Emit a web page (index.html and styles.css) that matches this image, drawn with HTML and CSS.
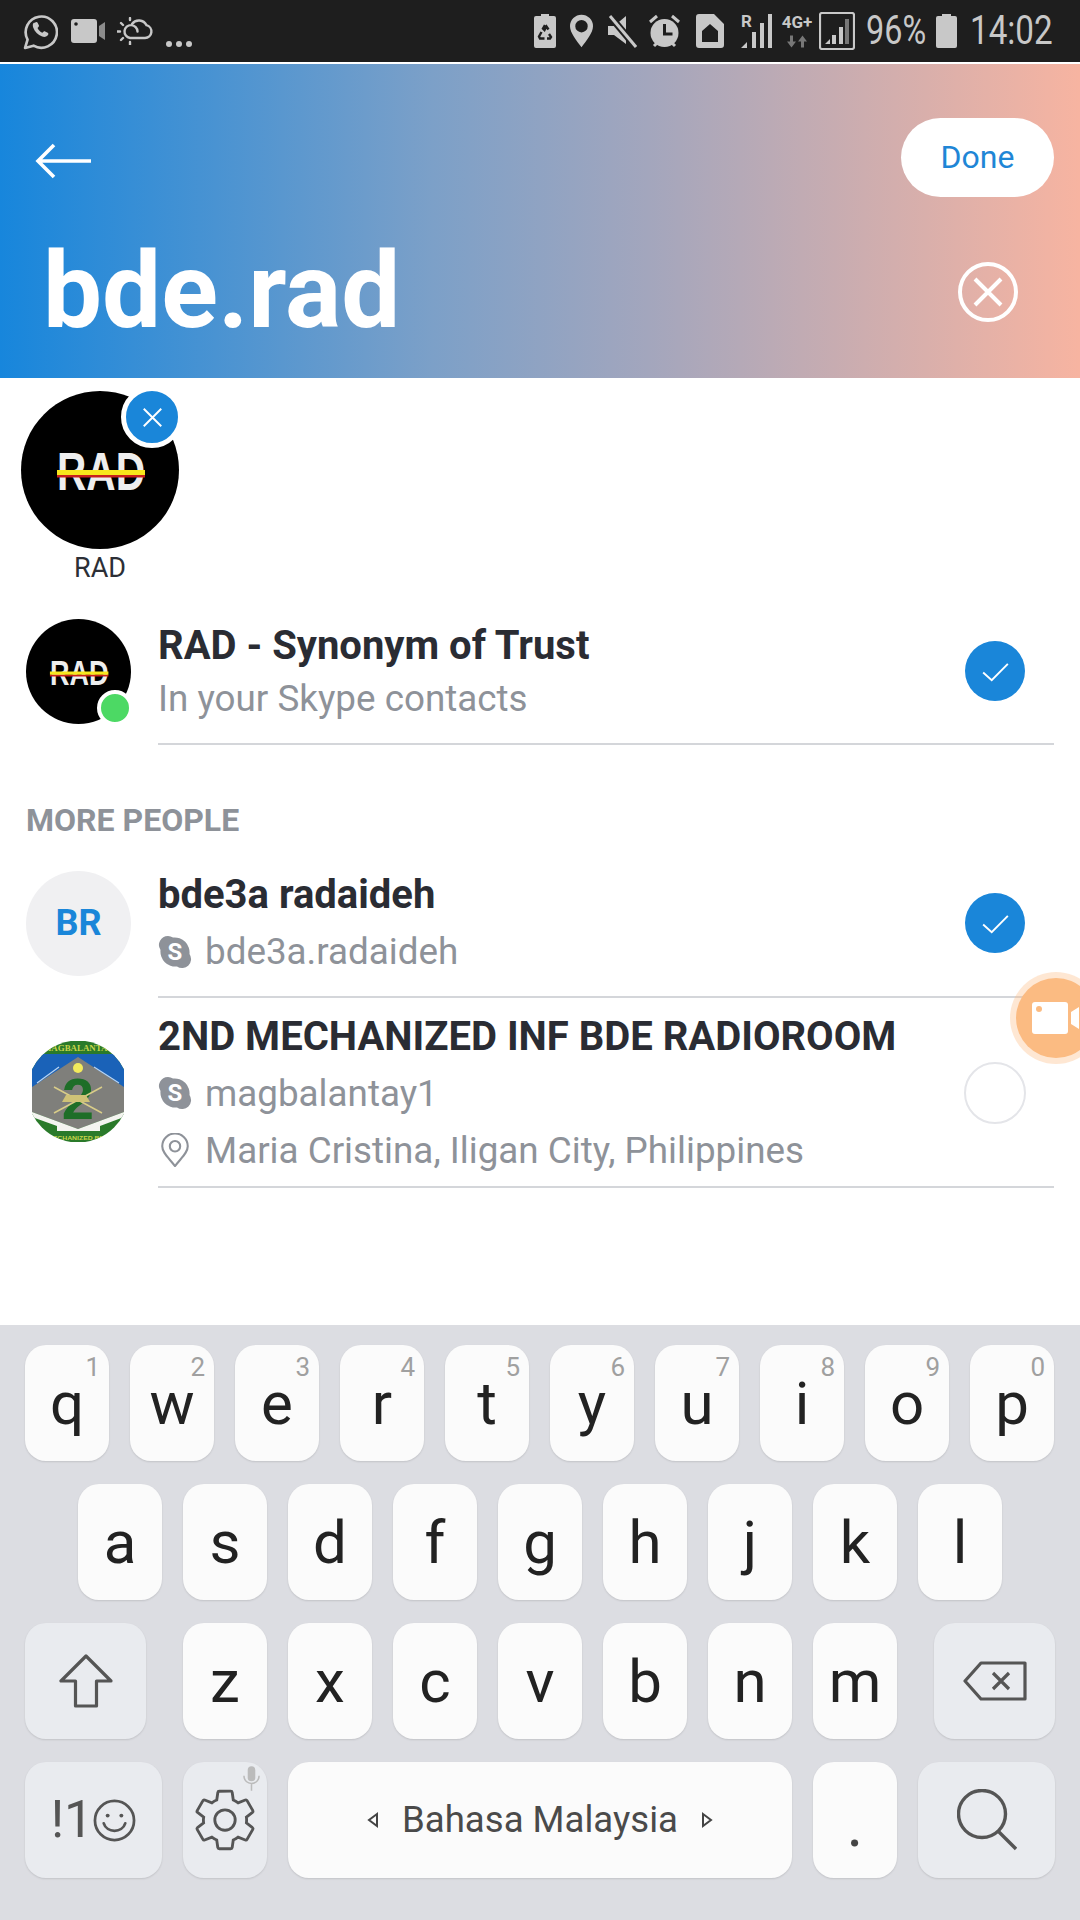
FILE: index.html
```html
<!DOCTYPE html>
<html lang="en">
<head>
<meta charset="utf-8">
<title>Skype search</title>
<link rel="stylesheet" href="styles.css">
</head>
<body>
<div class="phone">
  <div class="status">
    <div class="status-left">
      <svg class="si si-wa" viewBox="0 0 34 36"><path d="M2 34l2.400-8.200A15.200 15.200 0 1 1 10.200 31.800z" fill="none" stroke="#c8c8c8" stroke-width="2.600" stroke-linejoin="round"/><path d="M11.500 9.500c1-1 2.200-1 2.700 0l1.200 2.500c.3.700.1 1.200-.4 1.700l-.9 1c.9 2 2.600 3.700 4.700 4.600l1.100-1.100c.5-.5 1-.6 1.600-.3l2.500 1.300c.9.500.9 1.700-.1 2.700-1.400 1.400-3.300 1.700-5.300.9-4.100-1.600-7.300-4.800-8.700-8.800-.7-2-.4-3.800.6-4.500z" fill="#c8c8c8"/></svg>
      <svg class="si si-vid" viewBox="0 0 34 24"><rect x="0" y="0" width="26" height="24" rx="3" fill="#c8c8c8"/><circle cx="5" cy="5" r="1.800" fill="#1e1e1e"/><path d="M28 7l6-4v18l-6-4z" fill="#8c8c8c"/></svg>
      <svg class="si si-cloud" viewBox="0 0 36 28" fill="none" stroke="#c8c8c8" stroke-width="2.400"><path d="M13 21h15a6.500 6.500 0 0 0 1.500-12.800A8.500 8.500 0 0 0 15 7M20.500 14.500a6.500 6.500 0 1 0-7.500 6.500" stroke-linecap="round"/><path d="M0 14.500h3M13 25v3M4 6l2 2M4 23l2-2M13 1v2" stroke-linecap="round"/></svg>
      <div class="dots"><i></i><i></i><i></i></div>
    </div>
    <div class="status-right">
      <svg class="si si-batr" viewBox="0 0 22 34"><path d="M7 0h8v2h5a2 2 0 0 1 2 2v28a2 2 0 0 1-2 2H2a2 2 0 0 1-2-2V4a2 2 0 0 1 2-2h5z" fill="#c8c8c8"/><path d="M11 11l-2 3.500 1.500 1.500 2-3.500 2 3M7.500 18L5 22.500l1 2h4.500M15 20l2 3-1 1.500h-3" fill="none" stroke="#1e1e1e" stroke-width="2.400"/></svg>
      <svg class="si si-pin" viewBox="0 0 24 34"><path fill-rule="evenodd" d="M12 0a12 12 0 0 1 12 12c0 7-7 15-12 22C7 27 0 19 0 12A12 12 0 0 1 12 0zm0 5.500a6.500 6.500 0 1 0 0 13 6.500 6.500 0 0 0 0-13z" fill="#c8c8c8"/></svg>
      <svg class="si si-mute" viewBox="0 0 30 34"><path d="M1 12h6L19 2v28L7 21H1z" fill="#c8c8c8"/><path d="M2 1l27 32" stroke="#1e1e1e" stroke-width="7"/><path d="M3 2l26 31" stroke="#c8c8c8" stroke-width="3"/></svg>
      <svg class="si si-alarm" viewBox="0 0 31 34"><circle cx="15.500" cy="19" r="14" fill="#c8c8c8"/><path d="M15.500 10v10h8" fill="none" stroke="#1e1e1e" stroke-width="3"/><path d="M1 8l7-6M30 8l-7-6M5 32l3-3M26 32l-3-3" stroke="#c8c8c8" stroke-width="3"/></svg>
      <svg class="si si-sim" viewBox="0 0 28 34"><path fill-rule="evenodd" d="M3 0h15l10 10v21a3 3 0 0 1-3 3H3a3 3 0 0 1-3-3V3a3 3 0 0 1 3-3zm3 17v11h16V17l-8-7z" fill="#c8c8c8"/></svg>
      <div class="sig-r"><span class="tiny tiny-r">R</span><svg class="si-bars" viewBox="0 0 31 34"><path d="M0 34l6-6v6zM11 18h4v16h-4zM19 9h4v25h-4zM27 0h4v34h-4z" fill="#c8c8c8"/></svg></div>
      <div class="sig-4g"><span class="tiny">4G+</span><svg class="si-arrows" viewBox="0 0 20 12"><path d="M3 0h3v6h3l-4.500 6L0 6h3z" fill="#777"/><path d="M14 12h3V6h3L15.500 0 11 6h3z" fill="#777"/></svg></div>
      <svg class="si si-box" viewBox="0 0 36 38"><rect x="1" y="1" width="34" height="36" rx="2" fill="none" stroke="#c8c8c8" stroke-width="2.200"/><path d="M6 32l5-5v5zM13 32v-9h4v9zM20 32V15h4v17z" fill="#c8c8c8"/><path d="M26 32V7h4v25z" fill="#777"/></svg>
      <span class="st-text st-pct">96%</span>
      <svg class="si si-bat" viewBox="0 0 21 34"><path d="M6 0h9v2h4a2 2 0 0 1 2 2v28a2 2 0 0 1-2 2H2a2 2 0 0 1-2-2V4a2 2 0 0 1 2-2h4z" fill="#c8c8c8"/></svg>
      <span class="st-text st-time">14:02</span>
    </div>
  </div>

  <header class="head">
    <div class="head-top">
      <svg class="back" viewBox="0 0 56 36" fill="none" stroke="#fff" stroke-width="3.600"><path d="M56 18H3M19 2L3 18l16 16"/></svg>
      <button class="done">Done</button>
    </div>
    <div class="head-search">
      <h1 class="query">bde.rad</h1>
      <svg class="clear" viewBox="0 0 60 60" fill="none" stroke="#fff" stroke-width="4"><circle cx="30" cy="30" r="28"/><path d="M17 17l26 26M43 17L17 43"/></svg>
    </div>
  </header>

  <main class="content">
    <div class="chip">
      <div class="chip-av">
        <svg class="rad" viewBox="0 0 158 158"><circle cx="79" cy="79" r="79" fill="#000"/><text x="80" y="99" text-anchor="middle" class="rad-text" textLength="88" lengthAdjust="spacingAndGlyphs">RAD</text><rect x="36" y="79" width="88" height="5" fill="#f8e71c"/><rect x="36" y="84" width="88" height="2.500" fill="#c8201c"/></svg>
        <span class="chip-x"><svg viewBox="0 0 24 24" fill="none" stroke="#fff" stroke-width="2.200"><path d="M2 2l20 20M22 2L2 22"/></svg></span>
      </div>
      <div class="chip-label">RAD</div>
    </div>

    <section class="row row-one">
      <div class="av">
        <svg class="rad" viewBox="0 0 158 158"><circle cx="79" cy="79" r="79" fill="#000"/><text x="80" y="99" text-anchor="middle" class="rad-text" textLength="88" lengthAdjust="spacingAndGlyphs">RAD</text><rect x="36" y="79" width="88" height="5" fill="#f8e71c"/><rect x="36" y="84" width="88" height="2.500" fill="#c8201c"/></svg>
        <span class="online"></span>
      </div>
      <div class="body">
        <div class="txt txt-tight">
          <div class="name">RAD - Synonym of Trust</div>
          <div class="sub">In your Skype contacts</div>
        </div>
        <span class="check"><svg viewBox="0 0 28 20" fill="none" stroke="#fff" stroke-width="2"><path d="M1 10l9 8L27 1"/></svg></span>
      </div>
    </section>

    <h2 class="label">MORE PEOPLE</h2>

    <section class="row row-two">
      <div class="av av-init">BR</div>
      <div class="body">
        <div class="txt">
          <div class="name">bde3a radaideh</div>
          <div class="sub"><svg class="sky" viewBox="0 0 34 34"><path d="M10 1a9 9 0 0 1 5 1.500 15 15 0 0 1 16.500 16.500A9 9 0 0 1 19 31.500 15 15 0 0 1 2.500 15 9 9 0 0 1 10 1z" fill="#8e9299"/><text x="17" y="25" text-anchor="middle" class="sky-s">S</text></svg>bde3a.radaideh</div>
        </div>
        <span class="check"><svg viewBox="0 0 28 20" fill="none" stroke="#fff" stroke-width="2"><path d="M1 10l9 8L27 1"/></svg></span>
      </div>
    </section>

    <section class="row row-three">
      <div class="av av-emblem">
        <svg viewBox="0 0 92 101">
          <defs><clipPath id="em"><circle cx="46" cy="50.500" r="51"/></clipPath></defs>
          <g clip-path="url(#em)">
            <rect width="92" height="101" fill="#2a7a2a"/>
            <rect y="13" width="92" height="40" fill="#1a62b8"/>
            <path d="M0 46L46 16l46 30v25L46 88 0 71z" fill="#7f7f7b"/>
            <path d="M0 71l46 17 46-17v5L68 85v5H25v-5L0 76z" fill="#f4f4f0"/>
            <path d="M5 42l22-16M87 42L62 26" stroke="#b8d4f2" stroke-width="1.200"/>
            <circle cx="46" cy="27" r="5" fill="#f3ea5c"/>
            <text x="46" y="10" text-anchor="middle" class="em-top" textLength="70" lengthAdjust="spacingAndGlyphs">MAGBALANTAY</text>
            <text x="46" y="78" text-anchor="middle" class="em-two">2</text>
            <path d="M22 46l48 26M70 46L22 72" stroke="#d8cc88" stroke-width="1.500"/>
            <path d="M34 54h20l4 7H30z" fill="#cfc277"/>
            <text x="46" y="99" text-anchor="middle" class="em-bot" textLength="62" lengthAdjust="spacingAndGlyphs">MECHANIZED BDE</text>
          </g>
        </svg>
      </div>
      <div class="body">
        <div class="txt">
          <div class="name">2ND MECHANIZED INF BDE RADIOROOM</div>
          <div class="sub"><svg class="sky" viewBox="0 0 34 34"><path d="M10 1a9 9 0 0 1 5 1.500 15 15 0 0 1 16.500 16.500A9 9 0 0 1 19 31.500 15 15 0 0 1 2.500 15 9 9 0 0 1 10 1z" fill="#8e9299"/><text x="17" y="25" text-anchor="middle" class="sky-s">S</text></svg>magbalantay1</div>
          <div class="sub"><svg class="sky" viewBox="0 0 34 36" fill="none" stroke="#8e9299" stroke-width="2.200"><path d="M17 35C10 26 3.500 21 3.500 14a13.500 13.500 0 0 1 27 0C30.500 21 24 26 17 35z"/><circle cx="17" cy="14" r="5.500"/></svg>Maria Cristina, Iligan City, Philippines</div>
        </div>
        <span class="check check-off"></span>
      </div>
    </section>

    <div class="fab-wrap"><span class="fab"><svg viewBox="0 0 60 36"><rect width="36" height="32" y="2" rx="3" fill="#fff"/><circle cx="7" cy="9" r="3" fill="#fbbb82"/><path d="M39 12l8-5v22l-8-5zM50 6h10v24H50z" fill="#fff"/></svg></span></div>
  </main>

  <div class="kb">
    <div class="kr">
      <div class="k"><span class="hint">1</span>q</div>
      <div class="k"><span class="hint">2</span>w</div>
      <div class="k"><span class="hint">3</span>e</div>
      <div class="k"><span class="hint">4</span>r</div>
      <div class="k"><span class="hint">5</span>t</div>
      <div class="k"><span class="hint">6</span>y</div>
      <div class="k"><span class="hint">7</span>u</div>
      <div class="k"><span class="hint">8</span>i</div>
      <div class="k"><span class="hint">9</span>o</div>
      <div class="k"><span class="hint">0</span>p</div>
    </div>
    <div class="kr kr-center">
      <div class="k">a</div><div class="k">s</div><div class="k">d</div><div class="k">f</div><div class="k">g</div><div class="k">h</div><div class="k">j</div><div class="k">k</div><div class="k">l</div>
    </div>
    <div class="kr">
      <div class="k k-fn k-shift"><svg class="ic-shift" viewBox="0 0 54 54" fill="none" stroke="#555" stroke-width="3.200" stroke-linejoin="round"><path d="M27 2L2 27h14.500v25h21V27H52z"/></svg></div>
      <div class="k">z</div><div class="k">x</div><div class="k">c</div><div class="k">v</div><div class="k">b</div><div class="k">n</div><div class="k">m</div>
      <div class="k k-fn k-del"><svg class="ic-del" viewBox="0 0 64 40" fill="none" stroke="#555" stroke-width="3.200" stroke-linejoin="round"><path d="M18 2h44v36H18L2 20zM30 12l16 16M46 12L30 28"/></svg></div>
    </div>
    <div class="kr">
      <div class="k k-fn k-sym"><span class="sym-t">!1</span><svg class="ic-smile" viewBox="0 0 44 44" fill="none" stroke="#555" stroke-width="2.800"><circle cx="22" cy="22" r="20"/><path d="M11 25c3 10 19 10 22 0" stroke-linecap="round"/><circle cx="15" cy="17" r="2" fill="#555" stroke="none"/><circle cx="29" cy="17" r="2" fill="#555" stroke="none"/></svg></div>
      <div class="k k-fn k-set"><svg class="ic-gear" viewBox="0 0 24 24" fill="none" stroke="#555" stroke-width=".95"><path d="M19.140 12.940c.04-.3.06-.61.06-.94 0-.32-.02-.64-.07-.94l2.030-1.580a.49.49 0 0 0 .12-.61l-1.920-3.320a.488.488 0 0 0-.59-.22l-2.390.96c-.5-.38-1.030-.7-1.620-.94l-.36-2.540a.484.484 0 0 0-.48-.41h-3.840c-.24 0-.43.17-.47.41l-.36 2.540c-.59.24-1.130.57-1.620.94l-2.390-.96c-.22-.08-.47 0-.59.22L2.740 8.870c-.12.21-.08.47.12.61l2.030 1.580c-.05.3-.09.63-.09.94s.02.64.07.94l-2.030 1.580a.49.49 0 0 0-.12.61l1.920 3.320c.12.22.37.29.59.22l2.390-.96c.5.38 1.030.7 1.620.94l.36 2.540c.05.24.24.41.48.41h3.840c.24 0 .44-.17.47-.41l.36-2.540c.59-.24 1.130-.56 1.620-.94l2.390.96c.22.08.47 0 .59-.22l1.920-3.320c.12-.22.07-.47-.12-.61l-2.010-1.580z"/><circle cx="12" cy="12" r="3.400"/></svg><svg class="ic-mic" viewBox="0 0 18 26" fill="none" stroke="#bbb" stroke-width="1.600"><rect x="5" y="0" width="8" height="16" rx="4" fill="#bbb" stroke="none"/><path d="M1 10c0 11 16 11 16 0M9 18v8"/></svg></div>
      <div class="k k-space"><svg class="ic-tri" viewBox="0 0 12 16" fill="none" stroke="#444" stroke-width="2"><path d="M10 2L2 8l8 6z"/></svg><span class="space-t">Bahasa Malaysia</span><svg class="ic-tri" viewBox="0 0 12 16" fill="none" stroke="#444" stroke-width="2"><path d="M2 2l8 6-8 6z"/></svg></div>
      <div class="k k-dot">.</div>
      <div class="k k-fn k-sym"><svg class="ic-search" viewBox="0 0 60 62" fill="none" stroke="#555" stroke-width="3.400"><circle cx="25" cy="25" r="23.500"/><path d="M41 42l18 18"/></svg></div>
    </div>
  </div>
</div>
</body>
</html>
```

FILE: styles.css
```css
* { box-sizing: border-box; }
html, body { margin: 0; padding: 0; }
body { font-family: Roboto, "Noto Sans", sans-serif; background: #fff; }
.phone { width: 1080px; height: 1920px; display: flex; flex-direction: column; overflow: hidden; position: relative; }

/* status bar */
.status { height: 64px; flex: none; background: #1e1e1e; border-bottom: 2px solid #fff; display: flex; justify-content: space-between; align-items: center; padding: 0 28px 0 23px; }
.status-left, .status-right { display: flex; align-items: center; }
.si { display: block; flex: none; }
.si-wa { width: 35px; height: 37px; }
.si-vid { width: 34px; height: 24px; margin-left: 13px; }
.si-cloud { width: 36px; height: 28px; margin-left: 12px; }
.dots { display: flex; gap: 4px; margin: 26px 0 0 13px; }
.dots i { width: 6px; height: 6px; border-radius: 50%; background: #c8c8c8; }
.si-batr { width: 22px; height: 34px; }
.si-pin { width: 23px; height: 34px; margin-left: 14px; }
.si-mute { width: 30px; height: 34px; margin-left: 14px; }
.si-alarm { width: 31px; height: 34px; margin-left: 12px; }
.si-sim { width: 28px; height: 34px; margin-left: 16px; }
.sig-r { width: 31px; height: 34px; margin-left: 17px; position: relative; }
.si-bars { position: absolute; left: 0; top: 0; width: 31px; height: 34px; }
.tiny { font-size: 17px; font-weight: 700; color: #c8c8c8; line-height: 17px; display: block; }
.tiny-r { position: absolute; left: 0; top: -1px; }
.sig-4g { width: 32px; height: 35px; margin-left: 9px; display: flex; flex-direction: column; align-items: center; white-space: nowrap; }
.si-arrows { width: 20px; height: 13px; margin-top: 4px; }
.si-box { width: 36px; height: 38px; margin-left: 6px; }
.st-text { color: #c8c8c8; font-size: 40px; line-height: 40px; display: block; transform-origin: left center; white-space: nowrap; }
.st-pct { width: 60px; margin-left: 11px; transform: scaleX(.81); }
.si-bat { width: 21px; height: 34px; margin-left: 10px; }
.st-time { width: 82px; margin-left: 13px; transform: scaleX(.83); }

/* header */
.head { height: 314px; flex: none; background: linear-gradient(90deg, #1786dc 0%, #7ca0c8 40%, #a3a6bd 60%, #f7b4a1 100%); padding: 54px 26px 0 35px; }
.head-top { display: flex; justify-content: space-between; align-items: center; height: 79px; }
.back { width: 56px; height: 36px; display: block; margin-top: 6px; }
.done { width: 153px; height: 79px; border: 0; border-radius: 40px; background: #fff; color: #1f86d6; font: 400 32px Roboto, sans-serif; padding: 0 0 2px; }
.head-search { display: flex; justify-content: space-between; align-items: center; padding: 0 36px 0 8px; height: 116px; margin-top: 37px; }
.query { margin: 0; font-size: 105px; line-height: 116px; font-weight: 700; color: #fff; }
.clear { width: 60px; height: 60px; display: block; }

/* content */
.content { flex: 1; position: relative; background: #fff; }
.chip { width: 158px; margin: 13px 0 0 21px; height: 206px; }
.chip-av { width: 158px; height: 158px; position: relative; }
.rad { display: block; width: 100%; height: 100%; }
.rad-text { font: 700 53px "Liberation Sans", sans-serif; fill: #eee; }
.chip-x { position: absolute; left: 100px; top: -5px; width: 62px; height: 62px; border: 5px solid #fff; border-radius: 50%; background: #1a86d9; display: flex; align-items: center; justify-content: center; }
.chip-x svg { width: 21px; height: 21px; display: block; }
.chip-label { text-align: center; font-size: 27px; line-height: 30px; color: #2c2f36; margin-top: 4px; }

.row { display: flex; align-items: center; padding: 0 26px; }
.row-one { height: 148px; }
.row-two { height: 150px; }
.row-three { height: 190px; }
.av { width: 105px; height: 105px; flex: none; position: relative; margin-right: 27px; }
.av-init { border-radius: 50%; background: #f0f0f2; color: #1a86d9; font-size: 36px; font-weight: 700; display: flex; align-items: center; justify-content: center; }
.av-emblem { padding: 0 6px; }
.av-emblem svg { display: block; width: 92px; height: 101px; }
.em-top { font: 700 9px "Liberation Serif", serif; fill: #c6d44a; }
.em-two { font: 700 58px "Liberation Sans", sans-serif; fill: #1e6e28; }
.em-bot { font: 700 5.500px "Liberation Sans", sans-serif; fill: #c6d44a; }
.online { position: absolute; right: -2px; bottom: -2px; width: 36px; height: 36px; border: 4px solid #fff; border-radius: 50%; background: #4cd964; }
.body { flex: 1; align-self: stretch; display: flex; align-items: center; justify-content: space-between; border-bottom: 2px solid #d4d6da; padding: 2px 29px 0 0; }
.txt { display: flex; flex-direction: column; }
.name { font-size: 40px; line-height: 57px; font-weight: 700; color: #2a2c33; white-space: nowrap; }
.sub { font-size: 36.800px; line-height: 57px; color: #8e9299; display: flex; align-items: center; white-space: nowrap; }
.txt-tight { padding-top: 2px; }
.txt-tight .name, .txt-tight .sub { line-height: 53px; }
.sky { width: 34px; height: 34px; flex: none; margin-right: 13px; display: block; }
.sky-s { font: 700 24px Roboto, sans-serif; fill: #fff; }
.check { width: 60px; height: 60px; border-radius: 50%; background: #1a86d9; display: flex; align-items: center; justify-content: center; flex: none; }
.check svg { width: 27px; height: 19px; display: block; margin-top: 2px; }
.check-off { width: 62px; height: 62px; margin-right: -1px; background: #fff; border: 2px solid #e4e5e9; }
.label { margin: 0; padding: 58px 26px 11px; font-size: 32px; line-height: 34px; font-weight: 700; color: #8e9299; }
.fab-wrap { position: absolute; left: 1010px; top: 594px; width: 92px; height: 92px; border-radius: 50%; background: rgba(251,187,130,.35); display: flex; align-items: center; justify-content: center; }
.fab { width: 80px; height: 80px; border-radius: 50%; background: #fbbb82; display: flex; align-items: center; padding-left: 16px; overflow: hidden; }
.fab svg { width: 60px; height: 36px; display: block; flex: none; }

/* keyboard */
.kb { height: 595px; flex: none; background: #dcdde2; padding: 20px 25px 0; display: flex; flex-direction: column; gap: 23px; }
.kr { display: flex; gap: 21px; }
.kr-center { justify-content: center; }
.k { width: 84px; height: 116px; flex: none; border-radius: 21px; background: #fbfbfb; box-shadow: 0 1px 2px rgba(0,0,0,.12); display: flex; align-items: center; justify-content: center; font-size: 60px; color: #222; position: relative; }
.hint { position: absolute; right: 9px; top: 6px; font-size: 26px; line-height: 32px; color: #a0a0a0; }
.k-fn { background: #e9ebef; }
.k-shift { width: 121px; margin-right: 16px; }
.k-del { width: 121px; margin-left: 16px; }
.k-sym { width: 137px; }
.k-space { width: 504px; font-size: 36.600px; color: #4a4a4a; gap: 23px; }
.space-t { line-height: 40px; }
.k-dot { color: #444; font-size: 64px; line-height: 116px; padding-top: 9px; }
.ic-shift { width: 54px; height: 54px; display: block; }
.ic-del { width: 64px; height: 40px; display: block; }
.sym-t { font-size: 52px; color: #555; line-height: 60px; }
.ic-smile { width: 43px; height: 43px; display: block; }
.ic-gear { width: 72px; height: 72px; display: block; }
.ic-mic { position: absolute; right: 7px; top: 4px; width: 17px; height: 25px; }
.ic-tri { width: 12px; height: 16px; display: block; }
.ic-search { width: 60px; height: 62px; display: block; }
```
